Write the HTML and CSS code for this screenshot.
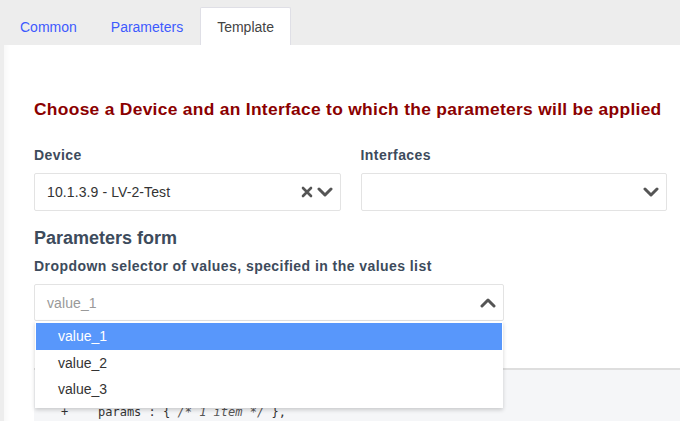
FILE: index.html
```html
<!DOCTYPE html>
<html>
<head>
<meta charset="utf-8">
<link rel="stylesheet" href="styles.css">
</head>
<body>
<div class="tabs">
  <div class="tab">Common</div>
  <div class="tab">Parameters</div>
  <div class="tab active">Template</div>
</div>
<div class="panel">
  <h2 class="title">Choose a Device and an Interface to which the parameters will be applied</h2>
  <div class="row">
    <div class="field">
      <div class="label">Device</div>
      <div class="select">
        <span class="value">10.1.3.9 - LV-2-Test</span>
        <span class="icons">
          <svg width="12" height="12" viewBox="0 0 12 12"><path d="M2 2 L10 10 M10 2 L2 10" stroke="#555" stroke-width="2.6" stroke-linecap="round"/></svg>
          <svg width="16" height="12" viewBox="0 0 16 12"><path d="M2 3 L8 9 L14 3" fill="none" stroke="#555" stroke-width="3" stroke-linecap="round" stroke-linejoin="round"/></svg>
        </span>
      </div>
    </div>
    <div class="field">
      <div class="label">Interfaces</div>
      <div class="select">
        <span class="value"></span>
        <span class="icons">
          <svg width="16" height="12" viewBox="0 0 16 12"><path d="M2 3 L8 9 L14 3" fill="none" stroke="#555" stroke-width="3" stroke-linecap="round" stroke-linejoin="round"/></svg>
        </span>
      </div>
    </div>
  </div>
  <h3 class="subtitle">Parameters form</h3>
  <div class="label">Dropdown selector of values, specified in the values list</div>
  <div class="dropdown">
    <div class="select open">
      <span class="value placeholder">value_1</span>
      <span class="icons">
        <svg width="16" height="12" viewBox="0 0 16 12"><path d="M2 9 L8 3 L14 9" fill="none" stroke="#555" stroke-width="3" stroke-linecap="round" stroke-linejoin="round"/></svg>
      </span>
    </div>
    <ul class="menu">
      <li class="opt hl">value_1</li>
      <li class="opt">value_2</li>
      <li class="opt">value_3</li>
    </ul>
  </div>
  <div class="code">
    <div class="line"><span class="plus">+</span><span class="key">params</span> : { <span class="cm">/* 1 item */</span> },</div>
  </div>
</div>
</body>
</html>
```

FILE: styles.css
```css
* { box-sizing: border-box; }
html, body { margin: 0; padding: 0; }
body {
  background: #ededed;
  font-family: "Liberation Sans", Arial, sans-serif;
  width: 680px;
  height: 421px;
  overflow: hidden;
}
.tabs {
  display: flex;
  height: 45px;
  padding-left: 3px;
  align-items: flex-end;
}
.tab {
  height: 38px;
  padding: 0 16px;
  display: flex;
  align-items: center;
  font-size: 14px;
  color: #3d5afe;
  border: 1px solid transparent;
  border-bottom: none;
}
.tab.active {
  background: #fff;
  color: #444;
  border-color: #dfdfe6;
  border-radius: 2px 2px 0 0;
}
.panel {
  background: #fff;
  margin-left: 4px;
  height: 376px;
  padding: 0 13px 0 30px;
  position: relative;
  box-shadow: inset 8px 0 6px -6px rgba(0,0,0,0.04);
}
.title {
  margin: 0;
  padding-top: 54px;
  font-size: 17.4px;
  letter-spacing: 0.3px;
  line-height: 20px;
  color: #8b0000;
  font-weight: bold;
}
.row {
  display: flex;
  gap: 20px;
  margin-top: 27px;
}
.field { flex: 1; }
.label {
  font-size: 14px;
  font-weight: bold;
  letter-spacing: 0.44px;
  color: #3d4b5c;
  line-height: 18px;
}
.select {
  margin-top: 9px;
  height: 38px;
  border: 1px solid #e3e3e3;
  border-radius: 2px;
  display: flex;
  align-items: center;
  padding: 0 7px 0 12px;
  background: #fff;
}
.value {
  flex: 1;
  font-size: 14px;
  letter-spacing: 0.1px;
  color: #333;
}
.placeholder { color: #999; }
.icons {
  display: flex;
  align-items: center;
  gap: 4px;
}
.subtitle {
  margin: 16px 0 0;
  font-size: 18px;
  line-height: 22px;
  color: #3d4b5c;
  font-weight: bold;
}
.subtitle + .label { margin-top: 8px; }
.dropdown {
  position: relative;
  width: 470px;
  z-index: 2;
}
.dropdown .select { margin-top: 9px; height: 37px; }
.menu {
  position: absolute;
  left: 1px;
  right: 1px;
  top: 100%;
  margin: 0;
  padding: 2px 0 5px;
  list-style: none;
  background: #fff;
  box-shadow: 0 2px 4px rgba(0,0,0,0.18);
}
.opt {
  height: 26.5px;
  line-height: 26px;
  padding-left: 22px;
  font-size: 14px;
  color: #333;
  margin: 0 1px;
}
.opt.hl {
  background: #5897fb;
  color: #fff;
}
.code {
  position: absolute;
  left: 30px;
  right: 0;
  top: 323px;
  bottom: 0;
  background: #f5f6f8;
  border-top: 2px solid #dedede;
  font-family: "DejaVu Sans Mono", monospace;
  font-size: 12px;
  color: #333;
  padding-top: 33px;
}
.line { white-space: pre; line-height: 18px; }
.plus { display: inline-block; width: 64px; padding-left: 27px; }
.cm { font-style: italic; color: #555; }
```
